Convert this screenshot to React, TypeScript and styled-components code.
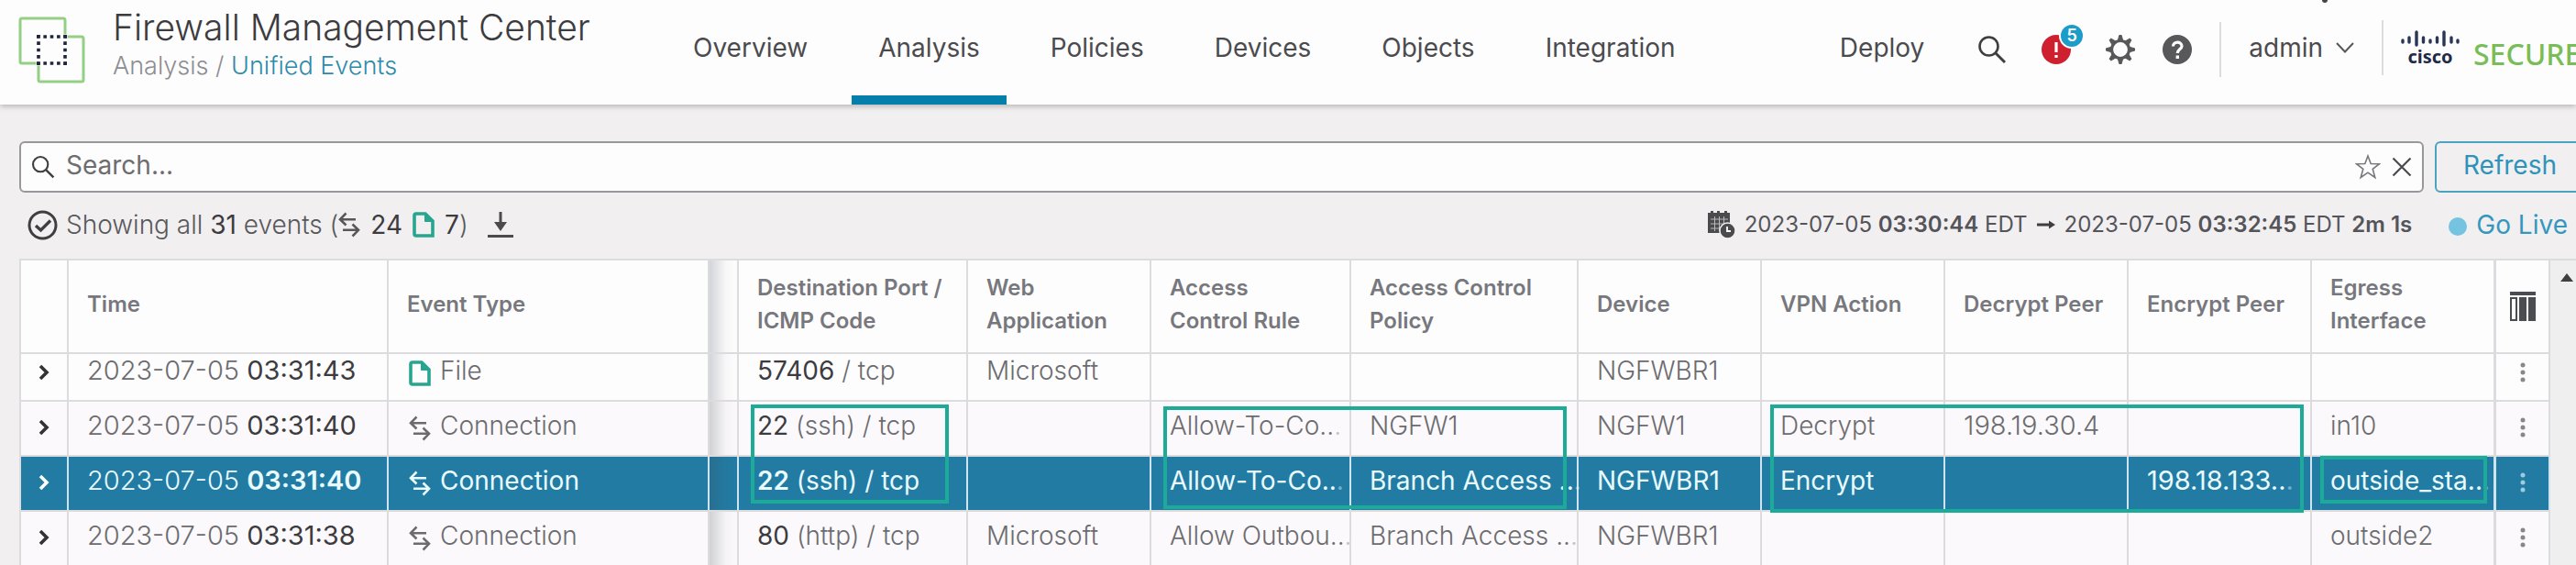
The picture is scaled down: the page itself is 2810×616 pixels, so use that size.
import React from 'react';
import styled, { createGlobalStyle, css } from 'styled-components';

const GlobalStyle = createGlobalStyle`
  * { box-sizing: border-box; }
  body { margin: 0; background: #f1eff0; }
  body, button, input { font-family: Inter, "Liberation Sans", sans-serif; }
  button { padding: 0; border: 0; background: none; color: inherit; cursor: pointer; }
  a { text-decoration: none; color: inherit; }
  svg { display: block; flex: none; }
`;

const Page = styled.div`
  display: flex;
  flex-direction: column;
  height: 100vh;
  overflow: hidden;
  color: #58585b;
  font-size: 28px;
  line-height: 36px;
`;

/* ---------- header ---------- */

const Header = styled.header`
  position: relative;
  display: flex;
  flex: none;
  background: #fefdfe;
  box-shadow: 0 2px 6px rgba(0, 0, 0, 0.25);
`;

const Brand = styled.div`
  display: flex;
  flex: none;
  gap: 30px;
  width: 727px;
  padding: 9px 0 0 20px;
  & > svg { margin-top: 9px; }
`;

const Title = styled.h1`
  margin: 0;
  font-size: 39px;
  font-weight: 300;
  line-height: 42px;
  color: #3c3c3f;
`;

const Crumbs = styled.div`
  font-size: 27px;
  font-weight: 300;
  line-height: 42px;
  color: #8d8d92;
  a { color: #2e8ba8; }
`;

const Nav = styled.nav`
  display: flex;
  gap: 19px;
`;

const NavLink = styled.a<{ $active?: boolean }>`
  padding: 0 29px;
  border-bottom: 10px solid ${(p) => (p.$active ? '#047fab' : 'transparent')};
  line-height: 104px;
  color: #4b4b4e;
`;

const HeaderTools = styled.div`
  display: flex;
  align-items: center;
  height: 104px;
  margin: 0 -6px 0 auto;
  color: #4b4b4e;
`;

const DeployButton = styled.button`
  margin-right: 58px;
  font-size: 28px;
  line-height: 36px;
`;

const ToolGroup = styled.div<{ $gap: number }>`
  display: flex;
  align-items: center;
  gap: ${(p) => p.$gap}px;
`;

const HeaderIcons = styled(ToolGroup)`
  padding-top: 4px;
`;

const IconButton = styled.button`
  position: relative;
  flex: none;
`;

const Badge = styled.span`
  position: absolute;
  top: -13px;
  right: -15px;
  width: 28px;
  height: 28px;
  border: 2px solid #fefdfe;
  border-radius: 50%;
  background: #1b9cc9;
  color: #fff;
  font-size: 18px;
  font-weight: 600;
  line-height: 24px;
  text-align: center;
`;

const Divider = styled.span`
  width: 2px;
  height: 60px;
  background: #dcdbdd;
`;

const UserButton = styled.button`
  display: flex;
  align-items: center;
  gap: 14px;
  margin: 0 30px;
  font-size: 28px;
  line-height: 36px;
`;

const CiscoLogo = styled.div`
  width: 66px;
  margin: 0 14px 0 18px;
  color: #1f2a48;
  text-align: center;
  font: 700 20px/20px "Noto Sans", sans-serif;
`;

const Secure = styled.span`
  width: 118px;
  padding-top: 14px;
  color: #78bd58;
  font: 500 32px/36px "Noto Sans", sans-serif;
`;

const WindowMark = styled.span`
  position: absolute;
  top: 0;
  left: 90%;
  width: 6px;
  height: 3px;
  margin-left: 4px;
  border-radius: 0 0 3px 3px;
  background: #444;
`;

/* ---------- search and summary ---------- */

const SearchRow = styled.form`
  display: flex;
  flex: none;
  gap: 12px;
  margin: 40px -10px 0 21px;
`;

const SearchBox = styled.div`
  display: flex;
  flex: 1;
  align-items: center;
  height: 56px;
  padding: 0 11px;
  border: 2px solid #98979b;
  border-radius: 6px;
  background: #fefdfe;
`;

const SearchInput = styled.input`
  flex: 1;
  min-width: 0;
  height: 48px;
  margin: 0 12px;
  padding: 0 0 4px;
  border: 0;
  outline: 0;
  background: none;
  font-size: 28px;
  color: #3c3c3f;
  &::placeholder { color: #6d6d70; opacity: 1; }
`;

const RefreshButton = styled.button`
  width: 164px;
  height: 56px;
  padding-bottom: 4px;
  border: 2px solid #4ba3bf;
  border-radius: 6px;
  font-size: 28px;
  color: #2e93bb;
`;

const SummaryRow = styled.div`
  display: flex;
  flex: none;
  align-items: center;
  height: 72px;
  padding: 0 9px 2px 30px;
`;

const Summary = styled.div`
  display: flex;
  flex: 1;
  align-items: center;
  gap: 9px;
  font-weight: 300;
  b { font-weight: 400; color: #3c3c3f; }
`;

const Counts = styled.span`
  display: flex;
  align-items: center;
  margin-right: 12px;
  & > b { margin: 0 11px; }
  & > b:last-of-type { margin-right: 0; }
`;

const TimeRange = styled.button`
  display: flex;
  align-items: center;
  gap: 10px;
  margin-right: 40px;
  font-size: 24px;
  line-height: 36px;
  color: #54545a;
  b { font-weight: 600; }
`;

const GoLive = styled.button`
  display: flex;
  align-items: center;
  gap: 10px;
  font-size: 28px;
  line-height: 36px;
  color: #3597bd;
  &::before {
    content: '';
    width: 20px;
    height: 20px;
    margin-top: 4px;
    border-radius: 50%;
    background: #74c3e0;
  }
`;

/* ---------- table ---------- */

const TableArea = styled.main`
  display: flex;
  flex: 1;
  min-height: 0;
  overflow: hidden;
  margin-left: 21px;
  border-top: 2px solid #dcdbdd;
`;

const TableFrame = styled.div`
  flex: 1;
  border-left: 2px solid #dcdbdd;
`;

const ScrollBar = styled.div`
  display: flex;
  justify-content: flex-end;
  width: 28px;
  padding: 14px 3px;
  background: #f0eff0;
`;

const Table = styled.table`
  width: 100%;
  table-layout: fixed;
  border-collapse: separate;
  border-spacing: 0;
`;

const Col = styled.col<{ $w?: number }>`
  width: ${(p) => (p.$w ? `${p.$w}px` : 'auto')};
`;

type Edge = 'shadow' | 'thick';

const cellEdges = css<{ $edge?: Edge }>`
  border-right: ${(p) => (p.$edge === 'thick' ? 3 : 2)}px solid #dcdbdd;
  border-bottom: 2px solid #dcdbdd;
`;

const shadow = 'linear-gradient(to right, rgba(60, 70, 80, 0.22), rgba(60, 70, 80, 0.03) 60%, transparent)';

const Th = styled.th<{ $edge?: Edge; $center?: boolean }>`
  ${cellEdges}
  height: 102px;
  padding: 0 8px 4px ${(p) => (p.$center ? 8 : 20)}px;
  background: ${(p) => (p.$edge === 'shadow' ? `${shadow}, ` : '')} #fefdfe;
  color: #77787d;
  font-size: 24px;
  font-weight: 600;
  line-height: 36px;
  text-align: left;
  button { display: block; margin: 4px auto 0; }
`;

const Td = styled.td<{ $edge?: Edge }>`
  ${cellEdges}
  position: relative;
  padding: 0;
  vertical-align: bottom;
  ${(p) => p.$edge === 'shadow' && css`background: ${shadow};`}
`;

const Row = styled.tr<{ $selected?: boolean; $clipped?: boolean }>`
  height: ${(p) => (p.$clipped ? 52 : 60)}px;
  background: ${(p) => (p.$selected ? '#227ba3' : p.$clipped ? '#fefdfe' : '#fbf9fb')};
  color: ${(p) => (p.$selected ? '#e9fbff' : '#6c6c70')};
  font-weight: ${(p) => (p.$selected ? 400 : 300)};
  b {
    font-weight: ${(p) => (p.$selected ? 600 : 400)};
    color: ${(p) => (p.$selected ? '#e9fbff' : '#3c3c3f')};
  }
  ${(p) => p.$selected && css`td { border-right-color: #cfe4ee; }`}
`;

const CellText = styled.div<{ $numeric?: boolean }>`
  display: flex;
  align-items: center;
  height: 50px;
  padding: 0 0 15px 20px;
  font-size: ${(p) => (p.$numeric ? 29 : 28)}px;
  white-space: pre;
`;

const DateText = styled.span`
  font-weight: 300;
`;

const Fading = styled.span`
  opacity: 0.4;
`;

const TypeIcon = styled.span`
  width: 36px;
  padding: 6px 0 0 2px;
`;

const CellButton = styled.button<{ $tone: string }>`
  display: flex;
  align-items: center;
  justify-content: center;
  width: 100%;
  height: 50px;
  padding-bottom: 10px;
  color: ${(p) => p.$tone};
`;

type Box = { x: number; y: number; w: number; h: number };

const Mark = styled.span<{ $box: Box }>`
  position: absolute;
  z-index: 1;
  top: ${(p) => p.$box.y}px;
  left: ${(p) => p.$box.x}px;
  width: ${(p) => p.$box.w}px;
  height: ${(p) => p.$box.h}px;
  border: 4px solid #1dab99;
  pointer-events: none;
`;

/* ---------- icons ---------- */

const ProductIcon = () => (
  <svg width="73" height="73" viewBox="0 0 73 73" fill="none">
    <path d="M4 2H49Q51 2 51 4V22H69Q71 22 71 24V69Q71 71 69 71H24Q22 71 22 69V51H4Q2 51 2 49V4Q2 2 4 2Z" stroke="#93cf84" strokeWidth="3" />
    <path d="M20 22H53M20 51H53" stroke="#fefdfe" strokeWidth="5" />
    <path d="M22 20V53M51 20V53" stroke="#fefdfe" strokeWidth="5" />
    <path d="M20 22H53M20 51H53" stroke="#20243f" strokeWidth="3.6" strokeDasharray="3.6 3.75" />
    <path d="M22 20V53M51 20V53" stroke="#20243f" strokeWidth="3.6" strokeDasharray="3.6 3.75" />
  </svg>
);

const SearchIcon = ({ size = 32 }: { size?: number }) => (
  <svg width={size} height={size} viewBox="0 0 32 32" fill="none" stroke="#3f3f42" strokeWidth="2.6">
    <circle cx="12.5" cy="12.5" r="10" />
    <path d="M19.5 19.5L30 30" strokeWidth="3" />
  </svg>
);

const AlertIcon = () => (
  <svg width="32" height="32" viewBox="0 0 32 32">
    <circle cx="16" cy="16" r="16" fill="#cf2030" />
    <path d="M16 8V19M16 22V25" stroke="#fff" strokeWidth="3.2" />
  </svg>
);

const GearIcon = () => (
  <svg width="32" height="32" viewBox="0 0 32 32" fill="none" stroke="#58585b">
    <circle cx="16" cy="16" r="9.5" strokeWidth="3.2" />
    {[0, 45, 90, 135, 180, 225, 270, 315].map((a) => (
      <path key={a} d="M14.8 0.5H17.2L18.8 6.5H13.2Z" fill="#58585b" strokeWidth="1" transform={`rotate(${a} 16 16)`} />
    ))}
  </svg>
);

const HelpIcon = () => (
  <svg width="32" height="32" viewBox="0 0 32 32" fill="none">
    <circle cx="16" cy="16" r="16" fill="#58585b" />
    <path d="M11.5 12.5C11.5 6.8 21 6.8 21 12.2C21 15.5 16.3 15.5 16.3 20" stroke="#fff" strokeWidth="3.2" />
    <path d="M14.6 22.5H18V26H14.6Z" fill="#fff" />
  </svg>
);

const ChevronDown = () => (
  <svg width="20" height="12" viewBox="0 0 20 12" fill="none" stroke="#58585b" strokeWidth="2">
    <path d="M1 1L10 10.5L19 1" />
  </svg>
);

const CiscoBars = () => (
  <svg width="66" height="20" viewBox="0 0 66 20" fill="none" stroke="#2b3654" strokeWidth="3.4" strokeLinecap="round">
    <path d="M3 12V14M10 9V14M18 3V17M25.5 9V14M33 12V14M40.5 9V14M48 3V17M56 9V14M63 12V14" />
  </svg>
);

const StarIcon = () => (
  <svg width="28" height="28" viewBox="0 0 28 28" fill="none" stroke="#77787d" strokeWidth="1.6">
    <path d="M14 2L17.2 10.5L26.5 10.7L19.2 16.3L21.8 25.5L14 20.2L6.2 25.5L8.8 16.3L1.5 10.7L10.8 10.5Z" />
  </svg>
);

const CloseIcon = () => (
  <svg width="22" height="22" viewBox="0 0 22 22" stroke="#4b4b4e" strokeWidth="2.2">
    <path d="M1.5 1.5L20.5 20.5M20.5 1.5L1.5 20.5" />
  </svg>
);

const CheckIcon = () => (
  <svg width="33" height="33" viewBox="0 0 33 33" fill="none" stroke="#3f3f42">
    <circle cx="16.5" cy="16.5" r="14.5" strokeWidth="3" />
    <path d="M9 17L14.5 22L25 11.5" strokeWidth="3.4" />
  </svg>
);

const ConnectionIcon = () => (
  <svg width="24" height="28" viewBox="0 0 24 28" fill="none" stroke="currentColor" strokeWidth="2.6">
    <path d="M8.5 1.5L2 8.2L8.5 14.5M2 8.2H19" />
    <path d="M15.5 13.5L22 19.8L15.5 26.5M22 19.8H5" />
  </svg>
);

const FileIcon = () => (
  <svg width="24" height="28" viewBox="0 0 24 28" fill="none" stroke="#27a58f" strokeWidth="3.6">
    <path d="M4 2H14L22 10V26H4Q2 26 2 24V4Q2 2 4 2Z" />
    <path d="M13.5 2V10.5H22Z" fill="#27a58f" strokeWidth="1" />
  </svg>
);

const DownloadIcon = () => (
  <svg width="28" height="30" viewBox="0 0 28 30" fill="#4b4b4e">
    <path d="M12.5 1H15.5V12H21L14 22L7 12H12.5ZM0 26H28V29H0Z" />
  </svg>
);

const CalendarIcon = () => (
  <svg width="30" height="30" viewBox="0 0 30 30" fill="#4b4b4e">
    <path d="M0 2H24V24H0Z" />
    <path d="M3 0H6V3H3ZM10 0H13V3H10ZM18 0H21V3H18Z" />
    <path d="M3 9H22M3 14H22M3 19H16M7.5 6V22M12.5 6V22M17.5 6V14" stroke="#b8b8bb" strokeWidth="1" />
    <circle cx="21.5" cy="21.5" r="8.5" stroke="#f1eff0" strokeWidth="1.5" />
    <path d="M21 17V22H25" stroke="#fff" strokeWidth="1.8" fill="none" />
  </svg>
);

const ArrowRight = () => (
  <svg width="20" height="14" viewBox="0 0 20 14" fill="#3f3f42">
    <path d="M0 5.5H13V2.5L20 7L13 11.5V8.5H0Z" />
  </svg>
);

const ExpandIcon = () => (
  <svg width="12" height="18" viewBox="0 0 12 18" fill="none" stroke="currentColor" strokeWidth="3.6">
    <path d="M2 2L9 9L2 16" />
  </svg>
);

const MoreIcon = () => (
  <svg width="6" height="24" viewBox="0 0 6 24" fill="currentColor">
    <circle cx="3" cy="4" r="2.5" />
    <circle cx="3" cy="12" r="2.5" />
    <circle cx="3" cy="20" r="2.5" />
  </svg>
);

const ColumnsIcon = () => (
  <svg width="28" height="32" viewBox="0 0 28 32" fill="#4b4b52">
    <path d="M0 0H28V4H0ZM10 6H18V32H10ZM20 6H28V32H20Z" />
    <path d="M1 7H7V31H1Z" fill="none" stroke="#4b4b52" strokeWidth="2" />
  </svg>
);

const ScrollUpIcon = () => (
  <svg width="14" height="9" viewBox="0 0 14 9" fill="#3f3f42">
    <path d="M7 0L14 9H0Z" />
  </svg>
);

/* ---------- data ---------- */

type Column = { label: React.ReactNode; width?: number; edge?: Edge };

const columns: Column[] = [
  { label: '', width: 52 },
  { label: 'Time', width: 349 },
  { label: 'Event Type' },
  { label: '', width: 32, edge: 'shadow' },
  { label: 'Destination Port / ICMP Code', width: 250 },
  { label: 'Web Application', width: 200 },
  { label: <>Access<br />Control Rule</>, width: 218 },
  { label: 'Access Control Policy', width: 248 },
  { label: 'Device', width: 200 },
  { label: 'VPN Action', width: 200 },
  { label: 'Decrypt Peer', width: 200 },
  { label: 'Encrypt Peer', width: 200 },
  { label: <>Egress<br />Interface</>, width: 201, edge: 'thick' },
];

type EventRow = {
  time: string;
  type: 'File' | 'Connection';
  port: string;
  service: string;
  app?: string;
  rule?: string;
  policy?: string;
  device: string;
  vpn?: string;
  decrypt?: string;
  encrypt?: string;
  egress?: string;
  marks?: { port?: Box; rule?: Box; vpn?: Box; egress?: Box };
};

const events: EventRow[] = [
  { time: '03:31:43', type: 'File', port: '57406', service: '', app: 'Microsoft', device: 'NGFWBR1' },
  {
    time: '03:31:40', type: 'Connection', port: '22', service: ' (ssh)', rule: 'Allow-To-Co...', policy: 'NGFW1',
    device: 'NGFW1', vpn: 'Decrypt', decrypt: '198.19.30.4', egress: 'in10',
    marks: {
      port: { x: 13, y: 3, w: 216, h: 108 },
      rule: { x: 13, y: 5, w: 440, h: 112 },
      vpn: { x: 9, y: 3, w: 582, h: 118 },
    },
  },
  {
    time: '03:31:40', type: 'Connection', port: '22', service: ' (ssh)', rule: 'Allow-To-Co...', policy: 'Branch Access ...',
    device: 'NGFWBR1', vpn: 'Encrypt', encrypt: '198.18.133...', egress: 'outside_sta...',
    marks: { egress: { x: 9, y: -1, w: 182, h: 52 } },
  },
  {
    time: '03:31:38', type: 'Connection', port: '80', service: ' (http)', app: 'Microsoft', rule: 'Allow Outbou...',
    policy: 'Branch Access ...', device: 'NGFWBR1', egress: 'outside2',
  },
];

const SELECTED = 2;

type CellProps = { text?: string; box?: Box; edge?: Edge; numeric?: boolean };

const Cell = ({ text = '', box, edge, numeric }: CellProps) => {
  const cut = text.endsWith('...');
  return (
    <Td $edge={edge}>
      {text && (
        <CellText $numeric={numeric}>
          {cut ? text.slice(0, -1) : text}
          {cut && <Fading>.</Fading>}
        </CellText>
      )}
      {box && <Mark $box={box} />}
    </Td>
  );
};

const navItems = ['Overview', 'Analysis', 'Policies', 'Devices', 'Objects', 'Integration'];

export default function App() {
  return (
    <Page>
      <GlobalStyle />
      <Header>
        <Brand>
          <ProductIcon />
          <div>
            <Title>Firewall Management Center</Title>
            <Crumbs>
              Analysis / <a href="#unified-events">Unified Events</a>
            </Crumbs>
          </div>
        </Brand>
        <Nav>
          {navItems.map((item) => (
            <NavLink key={item} href={`#${item.toLowerCase()}`} $active={item === 'Analysis'}>
              {item}
            </NavLink>
          ))}
        </Nav>
        <HeaderTools>
          <DeployButton>Deploy</DeployButton>
          <HeaderIcons $gap={30}>
            <ToolGroup $gap={38}>
              <IconButton aria-label="Search"><SearchIcon /></IconButton>
              <IconButton aria-label="Notifications"><AlertIcon /><Badge>5</Badge></IconButton>
              <IconButton aria-label="Settings"><GearIcon /></IconButton>
            </ToolGroup>
            <IconButton aria-label="Help"><HelpIcon /></IconButton>
            <Divider />
          </HeaderIcons>
          <UserButton>admin <ChevronDown /></UserButton>
          <Divider />
          <CiscoLogo><CiscoBars />cisco</CiscoLogo>
          <Secure>SECURE</Secure>
        </HeaderTools>
        <WindowMark />
      </Header>

      <SearchRow onSubmit={(e) => e.preventDefault()}>
        <SearchBox>
          <SearchIcon size={26} />
          <SearchInput type="text" aria-label="Search events" placeholder="Search..." />
          <ToolGroup $gap={12}>
            <IconButton type="button" aria-label="Save search"><StarIcon /></IconButton>
            <IconButton type="button" aria-label="Clear search"><CloseIcon /></IconButton>
          </ToolGroup>
        </SearchBox>
        <RefreshButton>Refresh</RefreshButton>
      </SearchRow>

      <SummaryRow>
        <Summary>
          <CheckIcon />
          <Counts>
            <span>Showing all <b>31</b> events (</span>
            <ConnectionIcon />
            <b>24</b>
            <FileIcon />
            <b>7</b>)
          </Counts>
          <IconButton aria-label="Download"><DownloadIcon /></IconButton>
        </Summary>
        <TimeRange>
          <CalendarIcon />
          <span>2023-07-05 <b>03:30:44</b> EDT</span>
          <ArrowRight />
          <span>2023-07-05 <b>03:32:45</b> EDT <b>2m 1s</b></span>
        </TimeRange>
        <GoLive>Go Live</GoLive>
      </SummaryRow>

      <TableArea>
        <TableFrame>
          <Table>
            <colgroup>
              {columns.map((c, i) => <Col key={i} $w={c.width} />)}
              <Col $w={59} />
            </colgroup>
            <thead>
              <tr>
                {columns.map((c, i) => <Th key={i} $edge={c.edge}>{c.label}</Th>)}
                <Th $center><IconButton aria-label="Choose columns"><ColumnsIcon /></IconButton></Th>
              </tr>
            </thead>
            <tbody>
              {events.map((e, i) => {
                const selected = i === SELECTED;
                return (
                  <Row key={i} $selected={selected} $clipped={i === 0}>
                    <Td>
                      <CellButton aria-label="Expand event" $tone={selected ? '#fff' : '#333'}><ExpandIcon /></CellButton>
                    </Td>
                    <Td><CellText $numeric><DateText>2023-07-05 </DateText><b>{e.time}</b></CellText></Td>
                    <Td>
                      <CellText>
                        <TypeIcon>{e.type === 'File' ? <FileIcon /> : <ConnectionIcon />}</TypeIcon>
                        {e.type}
                      </CellText>
                    </Td>
                    <Td $edge="shadow" />
                    <Td>
                      <CellText><b>{e.port}</b>{`${e.service} / tcp`}</CellText>
                      {e.marks?.port && <Mark $box={e.marks.port} />}
                    </Td>
                    <Cell text={e.app} />
                    <Cell text={e.rule} box={e.marks?.rule} />
                    <Cell text={e.policy} />
                    <Cell text={e.device} />
                    <Cell text={e.vpn} box={e.marks?.vpn} />
                    <Cell text={e.decrypt} numeric />
                    <Cell text={e.encrypt} numeric />
                    <Cell text={e.egress} box={e.marks?.egress} edge="thick" />
                    <Td>
                      <CellButton aria-label="Event actions" $tone={selected ? '#9ccbe0' : '#88888c'}><MoreIcon /></CellButton>
                    </Td>
                  </Row>
                );
              })}
            </tbody>
          </Table>
        </TableFrame>
        <ScrollBar><ScrollUpIcon /></ScrollBar>
      </TableArea>
    </Page>
  );
}
